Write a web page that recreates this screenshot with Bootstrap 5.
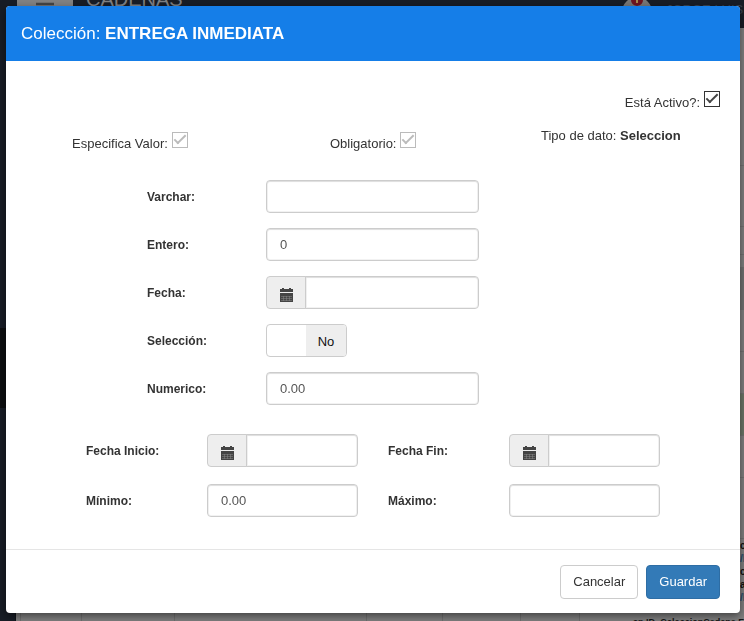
<!DOCTYPE html>
<html lang="es">
<head>
<meta charset="utf-8">
<meta name="viewport" content="width=device-width, initial-scale=1">
<title>Colección</title>
<link href="https://cdn.jsdelivr.net/npm/bootstrap@5.3.0/dist/css/bootstrap.min.css" rel="stylesheet">
<style>
  body { font-family: "Liberation Sans", Arial, sans-serif; font-size: 13px; line-height: 20px; color: #333; background: #181d26; }
  /* dimmed application behind the dialog */
  .app-shell { min-height: 100vh; }
  .app-bar { height: 28px; background: #181d26; overflow: hidden; }
  .menu-btn { width: 56px; height: 28px; margin-left: 17px; background: #828282; border: 0; padding: 0; }
  .menu-btn svg { display: block; margin: -11px auto 0; }
  .app-title { font-size: 20px; line-height: 20px; margin: -11px 0 0 13px; color: #7f8184; }
  .user-box { margin-left: auto; gap: 14px; color: #3b424d; font-size: 13px; width: 122px; white-space: nowrap; }
  .user-box svg, .user-box span { flex: none; }
  .side-strip { width: 17px; background: #181d26; border-right: 1px solid #10141a; }
  .side-strip .side-current { margin-top: 300px; height: 80px; background: #0d0e10; }
  .app-main { background: #808080; min-width: 0; }
  .strip-cells { width: 4px; margin-left: auto; overflow: hidden; }
  .strip-cells div { border-bottom: 1px solid #737373; }
  .s-xl { height: 138px; } .s-lg { height: 61px; } .s-md { height: 42px; } .s-sm { height: 28px; } .s-xs { height: 13px; }
  .is-dark { background: #737373; } .is-green { background: #6d7769; }
  .strip-text { font-size: 10px; line-height: 13px; font-weight: 700; color: #111; }
  .strip-text a { color: #22496b; text-decoration: none; }
  .bottom-cells { display: grid; grid-template-columns: 5fr 60fr 93fr 192fr 76fr 77fr 59fr 164fr; height: 8px; overflow: hidden; }
  .bottom-cells div { border-right: 1px solid #707070; min-width: 0; }
  .bottom-cells div:last-child { border: 0; padding: 3px 0 0 53px; font-size: 9px; line-height: 12px; font-weight: 700; color: #151515; white-space: nowrap; }

  /* dialog */
  .coll-dialog { max-width: none; margin: 6px 4px 6px 6px; }
  .modal-content { border: 0; border-radius: 4px; box-shadow: 0 3px 8px rgba(0,0,0,.5); color: #333; overflow: hidden; }
  .modal-header { background: #157ee8; color: #fff; border: 0; border-radius: 0; padding: 15px; height: 55px; }
  .modal-title { font-size: 17px; line-height: 24px; font-weight: 400; }
  .modal-body { padding: 28px 20px 32px; }
  .modal-footer { border-top: 1px solid #e5e5e5; padding: 15px 20px 14px; gap: 8px; }
  .modal-footer > * { margin: 0; }
  .tick { appearance: none; width: 16px; height: 16px; margin: 2px 0 0; border: 1px solid #333; background: #fff; display: grid; place-items: center; flex: none; }
  .tick::before { content: ""; width: 12px; height: 6px; border: solid #444; border-width: 0 0 2px 2px; transform: translateY(-2px) rotate(-45deg); }
  .tick:disabled { border-color: #bbb; }
  .tick:disabled::before { border-color: #bbb; }
  .flag-grid { display: grid; grid-template-columns: 46fr 258fr 211fr 179fr; margin: 13px 0 26px; align-items: start; }
  .flag-grid > :first-child { grid-column: 2; }
  .flag-item { padding-top: 4px; }
  .field-grid { display: grid; grid-template-columns: 121fr 119fr 213fr 241fr; row-gap: 15px; align-items: center; }
  .field-grid > label { grid-column: 2; }
  .range-grid { display: grid; grid-template-columns: 60fr 121fr 151fr 30fr 121fr 151fr 60fr; gap: 17px 0; margin-top: 29px; align-items: center; }
  .range-grid .r-a { grid-column: 2; } .range-grid .r-b { grid-column: 5; }
  .fl { font-size: 12px; font-weight: 700; }
  .form-control, .input-group-text, .btn { font-size: 13px; line-height: 20px; }
  .form-control { height: 33px; padding: 6px 13px; border: 1px solid #ccc; border-radius: 4px; color: #555; box-shadow: inset 0 1px 1px rgba(0,0,0,.08), inset 0 0 0 1px rgba(0,0,0,.05); min-width: 0; }
  .input-group { flex-wrap: nowrap; }
  .input-group-text { width: 40px; padding: 4px 0 0; justify-content: center; background: #eee; border-color: #ccc; border-radius: 4px; }
  .switch-btn { width: 81px; height: 33px; padding: 0; border: 1px solid #ccc; border-radius: 4px; background: #fff; display: flex; overflow: hidden; color: #111; }
  .switch-btn span { margin-left: auto; width: 40px; background: #eee; line-height: 33px; text-align: center; }
  .btn-cancel { background: #fff; border: 1px solid #ccc; border-radius: 4px; color: #333; padding: 6px 12px; }
  .btn-save { background: #337ab7; border: 1px solid #2e6da4; border-radius: 4px; color: #fff; padding: 6px 12px; }
</style>
<script src="https://cdn.jsdelivr.net/npm/bootstrap@5.3.0/dist/js/bootstrap.bundle.min.js"></script>
</head>
<body class="overflow-hidden">
<svg class="d-none">
  <symbol id="cal" viewBox="0 0 13 14">
    <path fill="#444" d="M2 0h2v1h5V0h2v1h2v3H0V1h2zM0 5h13v9H0z"/>
    <path stroke="#888" stroke-width=".5" d="M1 8.5h11M1 10.5h11M1 12.5h11M3.5 8v5M6.5 8v5M9.5 8v5"/>
  </symbol>
</svg>

<div class="app-shell d-flex flex-column">
  <header class="app-bar d-flex align-items-start">
    <button type="button" class="menu-btn" aria-label="Menú">
      <svg width="18" height="14"><path d="M0 2h18M0 7h18M0 12h18" stroke="#454545" stroke-width="2.5"/></svg>
    </button>
    <h1 class="app-title">CADENAS</h1>
    <div class="user-box d-flex">
      <svg width="30" height="28"><circle cx="15" cy="12" r="15" fill="#777"/><path d="M9 0h12q0 5-6 6-6-1-6-6z" fill="#6e1420"/><path d="M14 0h2v3h-2z" fill="#a78a4d"/></svg>
      <span>JORGE LUIS T</span>
    </div>
  </header>
  <div class="d-flex flex-grow-1">
    <nav class="side-strip"><div class="side-current"></div></nav>
    <main class="app-main flex-grow-1 d-flex flex-column">
      <div class="strip-cells flex-grow-1">
        <div class="s-xl"></div><div class="s-lg"></div><div class="s-sm"></div><div class="s-xs"></div>
        <div class="s-md is-dark"></div><div class="s-md"></div><div class="s-md"></div><div class="s-md is-green"></div>
        <div class="s-md"></div><div class="s-lg"></div>
        <section class="strip-text">ca<br><a href="#">/I</a><br>ca<br>ac<br><a href="#">/I</a></section>
      </div>
      <div class="bottom-cells">
        <div></div><div></div><div></div><div></div><div></div><div></div><div></div><div>on ID_ColeccionCadena ED</div>
      </div>
    </main>
  </div>
</div>

<div class="modal d-block" role="dialog" aria-labelledby="dlgTitle">
  <div class="modal-dialog coll-dialog">
    <form class="modal-content">
      <div class="modal-header">
        <h2 class="modal-title" id="dlgTitle">Colección: <strong>ENTREGA INMEDIATA</strong></h2>
      </div>
      <div class="modal-body">
        <div class="d-flex justify-content-end gap-1">
          <label for="activo" class="pt-1">Está Activo?:</label>
          <input type="checkbox" class="tick" id="activo" checked>
        </div>
        <div class="flag-grid">
          <div class="flag-item d-flex gap-1">
            <label class="pt-1" for="especifica">Especifica Valor:</label>
            <input type="checkbox" class="tick" id="especifica" checked disabled>
          </div>
          <div class="flag-item d-flex gap-1">
            <label class="pt-1" for="obligatorio">Obligatorio:</label>
            <input type="checkbox" class="tick" id="obligatorio" checked disabled>
          </div>
          <div class="text-nowrap">Tipo de dato: <strong>Seleccion</strong></div>
        </div>
        <div class="field-grid">
          <label class="fl" for="varchar">Varchar:</label>
          <input type="text" class="form-control" id="varchar">
          <label class="fl" for="entero">Entero:</label>
          <input type="text" class="form-control" id="entero" value="0">
          <label class="fl" for="fecha">Fecha:</label>
          <div class="input-group">
            <span class="input-group-text"><svg width="13" height="14"><use href="#cal"/></svg></span>
            <input type="text" class="form-control" id="fecha">
          </div>
          <label class="fl" for="seleccion">Selección:</label>
          <button type="button" class="switch-btn" id="seleccion"><span>No</span></button>
          <label class="fl" for="numerico">Numerico:</label>
          <input type="text" class="form-control" id="numerico" value="0.00">
        </div>
        <div class="range-grid">
          <label class="fl r-a" for="fini">Fecha Inicio:</label>
          <div class="input-group">
            <span class="input-group-text"><svg width="13" height="14"><use href="#cal"/></svg></span>
            <input type="text" class="form-control" id="fini">
          </div>
          <label class="fl r-b" for="ffin">Fecha Fin:</label>
          <div class="input-group">
            <span class="input-group-text"><svg width="13" height="14"><use href="#cal"/></svg></span>
            <input type="text" class="form-control" id="ffin">
          </div>
          <label class="fl r-a" for="minimo">Mínimo:</label>
          <input type="text" class="form-control" id="minimo" value="0.00">
          <label class="fl r-b" for="maximo">Máximo:</label>
          <input type="text" class="form-control" id="maximo">
        </div>
      </div>
      <div class="modal-footer">
        <button type="button" class="btn btn-cancel">Cancelar</button>
        <button type="submit" class="btn btn-save">Guardar</button>
      </div>
    </form>
  </div>
</div>
</body>
</html>
